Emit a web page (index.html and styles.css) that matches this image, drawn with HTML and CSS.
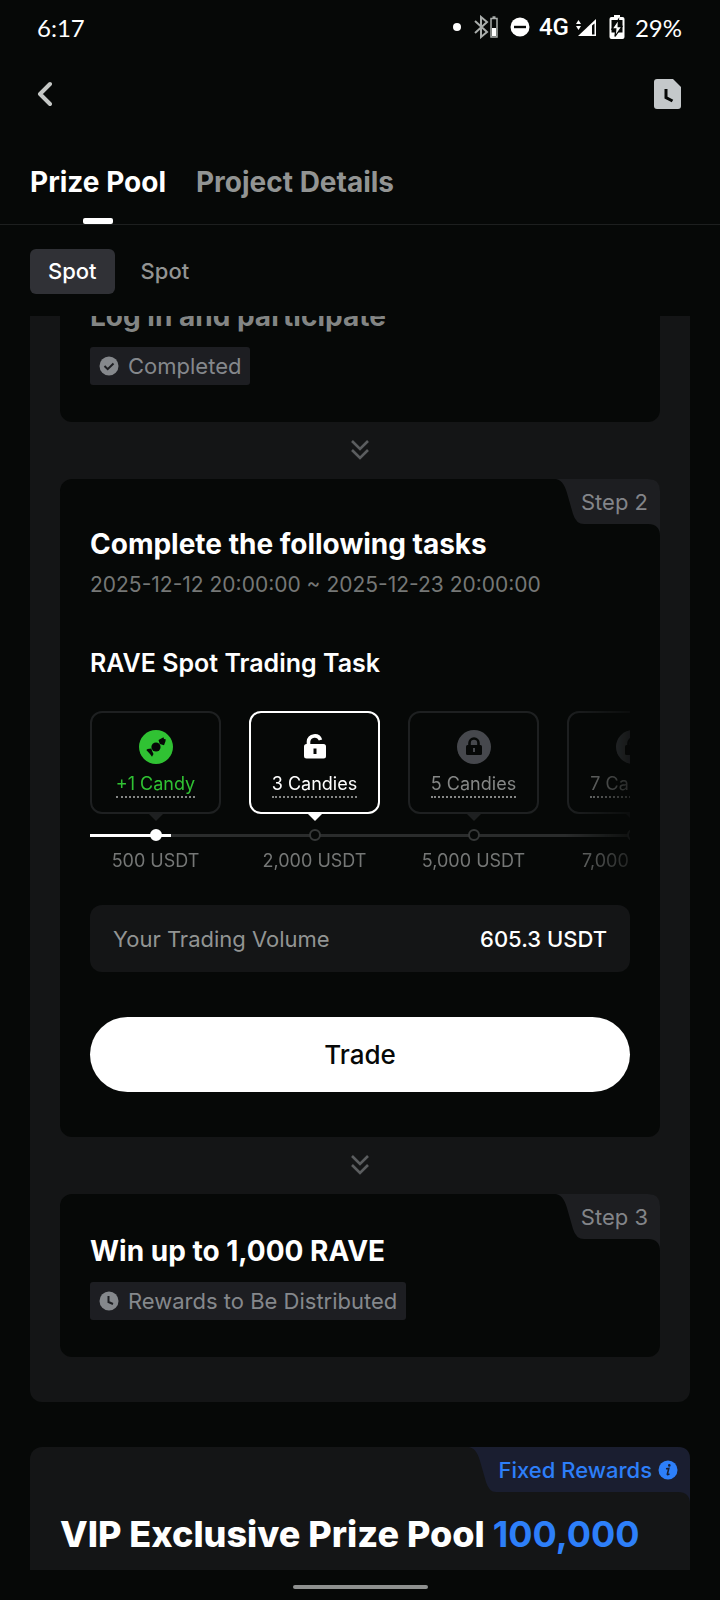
FILE: index.html
```html
<!DOCTYPE html>
<html lang="en">
<head>
<meta charset="utf-8">
<meta name="viewport" content="width=device-width, initial-scale=1">
<title>Prize Pool</title>
<link rel="stylesheet" href="styles.css">
</head>
<body>
<div class="status">
  <span class="clock">6:17</span>
  <div class="indicators">
    <span class="dot"></span>
    <svg class="bt" width="24" height="24" viewBox="0 0 24 24" fill="none" stroke="#a9adab" stroke-width="2"><path d="M1 6l12 11-6 5V2l6 5L1 18"/><path d="M17 3.500h6V22h-6zM18.500 2h3" stroke-width="1.500"/><path d="M18 13h4v8h-4z" fill="#fff" stroke="none"/></svg>
    <svg class="dnd" width="20" height="20" viewBox="0 0 20 20"><circle cx="10" cy="10" r="9.500" fill="#fff"/><path d="M4 10h12" stroke="#060807" stroke-width="2.400"/></svg>
    <span class="net">4G</span>
    <svg class="signal" width="22" height="20" viewBox="0 0 22 20"><path d="M1 7l2.500-4L6 7zM1 9l2.500 4L6 9z" fill="#fff"/><path d="M3 19L21 2v17z" fill="#fff"/><path d="M17 8.500l2.500-2v11H17z" fill="#060807"/></svg>
    <svg class="batt" width="16" height="24" viewBox="0 0 16 24"><path d="M5 0h6v2h2.500Q15.500 2 15.500 4v18q0 2-2 2h-11q-2 0-2-2V4q0-2 2-2H5z" fill="#fff"/><path d="M2.500 5h11v12.500h-11z" fill="#060807"/><path d="M9.500 4.500L3 14h3.800L6 21.500l7-10H9.200z" fill="#fff" stroke="#060807" stroke-width="1.300"/></svg>
    <span class="pct">29%</span>
  </div>
</div>

<header class="bar">
  <button class="icon-btn" aria-label="Back"><svg width="16" height="26" viewBox="0 0 16 26" fill="none" stroke="#c4c7c5" stroke-width="4" stroke-linecap="round" stroke-linejoin="round"><path d="M14 3L4 13l10 10"/></svg></button>
  <button class="icon-btn" aria-label="History"><svg width="28" height="30" viewBox="0 0 28 30"><path d="M3 0h16l8 8v19q0 3-3 3H3q-3 0-3-3V3q0-3 3-3z" fill="#c4c8ca"/><path d="M12 10v8.500l6.500 3.500" fill="none" stroke="#060807" stroke-width="3"/></svg></button>
</header>

<nav class="tabs">
  <a class="tab on" href="#pool">Prize Pool</a>
  <a class="tab" href="#details">Project Details</a>
</nav>
<div class="pills">
  <button class="pill on">Spot</button>
  <button class="pill">Spot</button>
</div>

<main class="scroller" id="pool">
  <section class="panel">
    <article class="card first">
      <h2 class="title dim">Log in and participate</h2>
      <p class="badge"><svg width="20" height="20" viewBox="0 0 20 20"><circle cx="10" cy="10" r="9.500" fill="#85888c"/><path d="M5.500 10l3.200 3.200 5.800-5.700" fill="none" stroke="#1d1e22" stroke-width="2"/></svg>Completed</p>
    </article>
    <svg class="down" width="18" height="20" viewBox="0 0 18 20" fill="none" stroke="#5b5d5f" stroke-width="2.600"><path d="M1 1l8 8 8-8M1 10l8 8 8-8"/></svg>

    <article class="card">
      <div class="flag"><svg class="flag-bg" width="105" height="57" viewBox="0 0 105 57"><path d="M0 0H93Q105 0 105 12V57Q105 45 93 45H29Q21 45 18 35L12 14Q8 0 0 0Z" fill="#1d1e21"/></svg><span class="flag-text">Step 2</span></div>
      <h2 class="title">Complete the following tasks</h2>
      <p class="dates">2025-12-12 20:00:00 ~ 2025-12-23 20:00:00</p>
      <h3 class="subtitle">RAVE Spot Trading Task</h3>

      <div class="steps">
        <div class="track"><div class="progress"></div></div>
        <div class="step">
          <button class="tile done">
            <svg width="34" height="34" viewBox="0 0 34 34"><circle cx="17" cy="17" r="17" fill="#30c233"/><g fill="#060807"><circle cx="17" cy="17" r="4.600"/><path d="M19.500 10l5-2.700.5 1.600 1.700.4-.2 2-1.500 4-4.200-1.300zM14.500 24l-1.500 2.700-2-2.600-3.700-4.100 1.300-.9 3.700-.5 1 3z"/></g></svg>
            <span class="amount">+1 Candy</span>
          </button>
          <span class="pointer"></span><span class="node full"></span>
          <span class="goal">500 USDT</span>
        </div>
        <div class="step">
          <button class="tile current">
            <svg width="34" height="34" viewBox="0 0 34 34"><path d="M10.500 15v-3.500a6.200 6.200 0 0 1 12-1.500" fill="none" stroke="#fff" stroke-width="3.600"/><path d="M8.500 14h17q2.500 0 2.500 2.500V26q0 2.500-2.500 2.500h-17Q6 28.500 6 26v-9.500Q6 14 8.500 14z" fill="#fff"/><path d="M15.500 18.500h3V24h-3z" fill="#060807"/></svg>
            <span class="amount">3 Candies</span>
          </button>
          <span class="pointer lit"></span><span class="node"></span>
          <span class="goal">2,000 USDT</span>
        </div>
        <div class="step">
          <button class="tile">
            <svg width="34" height="34" viewBox="0 0 34 34"><circle cx="17" cy="17" r="17" fill="#46484d"/><path d="M12.500 16v-3a4.500 4.500 0 0 1 9 0v3" fill="none" stroke="#060807" stroke-width="2.600"/><rect x="9" y="15" width="16" height="10" rx="1.500" fill="#060807"/><path d="M17 18v4" stroke="#46484d" stroke-width="2"/></svg>
            <span class="amount">5 Candies</span>
          </button>
          <span class="pointer"></span><span class="node"></span>
          <span class="goal">5,000 USDT</span>
        </div>
        <div class="step">
          <button class="tile">
            <svg width="34" height="34" viewBox="0 0 34 34"><circle cx="17" cy="17" r="17" fill="#46484d"/><path d="M12.500 16v-3a4.500 4.500 0 0 1 9 0v3" fill="none" stroke="#060807" stroke-width="2.600"/><rect x="9" y="15" width="16" height="10" rx="1.500" fill="#060807"/><path d="M17 18v4" stroke="#46484d" stroke-width="2"/></svg>
            <span class="amount">7 Candies</span>
          </button>
          <span class="pointer"></span><span class="node"></span>
          <span class="goal">7,000 USDT</span>
        </div>
      </div>

      <div class="volume"><span>Your Trading Volume</span><strong>605.3 USDT</strong></div>
      <button class="trade">Trade</button>
    </article>
    <svg class="down" width="18" height="20" viewBox="0 0 18 20" fill="none" stroke="#5b5d5f" stroke-width="2.600"><path d="M1 1l8 8 8-8M1 10l8 8 8-8"/></svg>

    <article class="card last">
      <div class="flag"><svg class="flag-bg" width="105" height="57" viewBox="0 0 105 57"><path d="M0 0H93Q105 0 105 12V57Q105 45 93 45H29Q21 45 18 35L12 14Q8 0 0 0Z" fill="#1d1e21"/></svg><span class="flag-text">Step 3</span></div>
      <h2 class="title">Win up to 1,000 RAVE</h2>
      <p class="badge"><svg width="20" height="20" viewBox="0 0 20 20"><circle cx="10" cy="10" r="9.500" fill="#85888c"/><path d="M9.500 5v6l4.500 2" fill="none" stroke="#1d1e22" stroke-width="2"/></svg>Rewards to Be Distributed</p>
    </article>
  </section>

  <section class="vip">
    <div class="flag fixed"><svg class="flag-bg" width="222" height="57" viewBox="0 0 222 57"><path d="M0 0H210Q222 0 222 12V57Q222 45 210 45H28Q21 45 18 35L12 14Q8 0 0 0Z" fill="#1a1e30"/></svg><span class="flag-text">Fixed Rewards</span><svg class="info" width="20" height="20" viewBox="0 0 20 20"><circle cx="10" cy="10" r="9.500" fill="#2d7ff9"/><circle cx="11.300" cy="5.400" r="1.300" fill="#1a1e30"/><path d="M8 8.800l2.800-.3-1.500 5.800q0 .8 2.200-.4" fill="none" stroke="#1a1e30" stroke-width="1.600"/></svg></div>
    <h2 class="headline">VIP Exclusive Prize Pool <span>100,000</span></h2>
  </section>
</main>
<footer class="home"><span></span></footer>
</body>
</html>
```

FILE: styles.css
```css
* { box-sizing: border-box; }
body {
  margin: 0;
  height: 100vh;
  display: flex;
  flex-direction: column;
  background: #060807;
  color: #fff;
  font-family: Inter, "Liberation Sans", sans-serif;
  font-size: 22px;
}
h2, h3, p { margin: 0; }
button { font: inherit; color: inherit; background: none; border: 0; padding: 0; }
a { color: inherit; text-decoration: none; }
svg { display: block; flex: none; }

.status {
  display: flex;
  justify-content: space-between;
  align-items: center;
  height: 54px;
  padding: 0 38px 0 37px;
  font-family: Lato, sans-serif;
  font-size: 24px;
}
.indicators { display: flex; align-items: center; }
.dot { width: 8px; height: 8px; border-radius: 50%; background: #fff; margin-right: 13px; }
.dnd { margin-left: 12px; }
.net { margin-left: 9px; font: 500 24px Roboto, sans-serif; }
.signal { margin-left: 6px; }
.batt { margin-left: 12px; }
.pct { margin-left: 10px; }

.bar { display: flex; justify-content: space-between; align-items: center; height: 80px; padding: 0 38px 0 36px; }
.tabs {
  display: flex;
  gap: 30px;
  height: 91px;
  padding: 28px 30px 0;
  border-bottom: 1px solid #1d1f1f;
  font-size: 28px;
  font-weight: 700;
  line-height: 40px;
  color: #929493;
}
.tab.on { color: #fff; position: relative; }
.tab.on::after {
  content: "";
  position: absolute;
  bottom: 0;
  left: 50%;
  width: 30px;
  height: 6px;
  margin-left: -15px;
  border-radius: 2px;
  background: #fff;
}
.pills { display: flex; gap: 8px; padding: 24px 30px 22px; font-weight: 500; }
.pill { height: 45px; padding: 0 18px 2px; border-radius: 6px; color: #929493; }
.pill.on { background: #303136; color: #fff; }

.scroller { flex: 1; min-height: 0; overflow: hidden; padding: 0 30px; }
.panel {
  display: flex;
  flex-direction: column;
  margin-top: -20px;
  padding: 0 30px 45px;
  background: #141516;
  border-radius: 12px;
}
.card {
  position: relative;
  padding: 45px 30px;
  border-radius: 12px;
  background: #060807;
}
.card.first { padding: 0 30px 37px; }
.card.last { padding: 37px 30px; }
.down { align-self: center; margin: 18px 0 19px; }
.title { font-size: 28px; line-height: 40px; font-weight: 700; }
.dim { color: #838584; }
.badge {
  display: flex;
  align-items: center;
  gap: 9px;
  width: fit-content;
  height: 38px;
  margin-top: 11px;
  padding: 0 9px;
  border-radius: 3px;
  background: #1d1e22;
  color: #85888c;
}
.dates { margin-top: 5px; font-size: 21px; line-height: 32px; color: #757776; }
.subtitle { margin: 44px 0 30px; font-size: 25px; line-height: 36px; font-weight: 600; }

.flag {
  position: absolute;
  top: 0;
  right: 0;
  display: flex;
  align-items: center;
  gap: 6px;
  height: 45px;
  padding-right: 12px;
  color: #838589;
}
.flag-bg { position: absolute; top: 0; right: 0; }
.flag-text, .info { position: relative; }
.flag.fixed { color: #2d7ff9; font-weight: 500; }

.steps {
  position: relative;
  display: flex;
  gap: 28px;
  overflow: hidden;
  mask-image: linear-gradient(to right, #000 88%, transparent 104%);
}
.step { flex: none; width: 131px; display: flex; flex-direction: column; align-items: center; font-size: 18px; position: relative; }
.tile {
  display: flex;
  flex-direction: column;
  align-items: center;
  gap: 8px;
  width: 100%;
  height: 103px;
  padding-top: 17px;
  border: 2px solid #1e2021;
  border-radius: 12px;
  color: #858786;
}
.tile.done { color: #30c233; }
.tile.current { border-color: #fff; color: #fff; }
.amount { line-height: 24px; border-bottom: 2px dotted #858786; }
.pointer { border: 7px solid transparent; border-top-color: #1e2021; border-bottom: 0; }
.pointer.lit { border-top-color: #fff; }
.node { width: 12px; height: 12px; margin-top: 8px; border: 2px solid #363838; border-radius: 50%; background: #060807; }
.node.full { background: #fff; border-color: #fff; }
.goal { margin-top: 8px; line-height: 24px; color: #757776; white-space: nowrap; }
.track { position: absolute; top: 123px; left: 0; right: 0; height: 3px; background: #2a2c2c; }
.progress { width: 15%; height: 100%; background: #fff; }

.volume {
  display: flex;
  justify-content: space-between;
  align-items: center;
  height: 67px;
  margin: 32px 0 45px;
  padding: 0 23px;
  border-radius: 12px;
  background: #141516;
  color: #929493;
}
.volume strong { color: #fff; font-weight: 500; }
.trade {
  display: block;
  width: 100%;
  height: 75px;
  border-radius: 38px;
  background: #fff;
  color: #060807;
  font-size: 26px;
  font-weight: 500;
}

.vip { position: relative; height: 160px; margin-top: 45px; padding: 63px 30px 0; border-radius: 12px; background: #141516; }
.headline { font-size: 36px; line-height: 48px; font-weight: 800; white-space: nowrap; }
.headline span { color: #2d7ff9; font-weight: 700; }

.home { display: flex; justify-content: center; height: 30px; padding-top: 15px; }
.home span { width: 135px; height: 4px; border-radius: 2px; background: #8e908f; }
```
